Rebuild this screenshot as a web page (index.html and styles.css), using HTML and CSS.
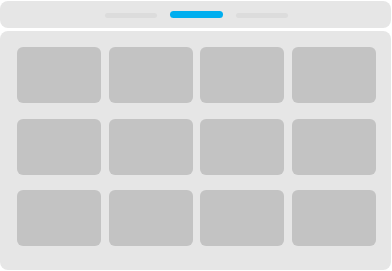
FILE: index.html
```html
<!DOCTYPE html>
<html>
    <head>
        <title>Gallery</title>
        <meta http-equiv="Content-Type" content="text/html; charset=utf-8"/>
        <link rel="stylesheet" href="styles.css">
    </head>
    <body>

    <div id="pager">
        <span class="dot"></span>
        <span class="dot active"></span>
        <span class="dot"></span>
    </div>

    <div id="panel">
        <div class="grid">
            <div class="tile"></div>
            <div class="tile"></div>
            <div class="tile"></div>
            <div class="tile"></div>
            <div class="tile"></div>
            <div class="tile"></div>
            <div class="tile"></div>
            <div class="tile"></div>
            <div class="tile"></div>
            <div class="tile"></div>
            <div class="tile"></div>
            <div class="tile"></div>
        </div>
    </div>

    </body>
</html>
```

FILE: styles.css
```css
html, body {
    margin: 0;
    padding: 0;
    background-color: white;
    font-family: "Liberation Sans", sans-serif;
}

body {
    width: 391px;
    padding-top: 1px;
}

#pager {
    height: 27px;
    background-color: #E6E6E6;
    border-radius: 8px;
    display: flex;
    justify-content: center;
    align-items: center;
    gap: 13px;
    padding-left: 1px;
    box-sizing: border-box;
}

.dot {
    display: block;
    width: 52px;
    height: 5px;
    border-radius: 3px;
    background-color: #DCDCDC;
    margin-top: 1px;
}

.dot.active {
    height: 7px;
    width: 53px;
    margin-top: 0;
    border-radius: 4px;
    background-color: #00AEEF;
}

#panel {
    margin-top: 3px;
    height: 239px;
    background-color: #E6E6E6;
    border-radius: 8px;
    padding-top: 16px;
    box-sizing: border-box;
}

.grid {
    display: grid;
    grid-template-columns: repeat(4, 84px);
    grid-auto-rows: 56px;
    column-gap: 7.67px;
    row-gap: 15.5px;
    justify-content: center;
    padding-left: 2px;
}

.tile {
    background-color: #C3C3C3;
    border-radius: 6px;
}
```
